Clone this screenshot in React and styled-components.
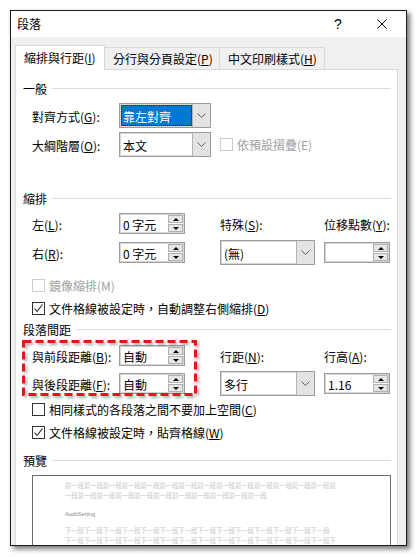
import React from 'react';
import styled, { createGlobalStyle } from 'styled-components';

// Global page reset
const GlobalStyle = createGlobalStyle`
  html, body {
    margin: 0;
    padding: 0;
    background: #fff;
  }
  body {
    font-family: "Noto Sans CJK TC", "Noto Sans", sans-serif;
    font-size: 12px;
    color: #000;
  }
  * {
    box-sizing: border-box;
  }
`;

const Page = styled.div`
  padding: 10px 0 0 10px;
  height: 557px;
`;

const Dialog = styled.div`
  width: 397px;
  height: 536px;
  border: 1px solid #1c1c1c;
  background: #f0f0f0;
  box-shadow: 3px 3px 5px rgba(0, 0, 0, 0.55);
  overflow: hidden;
  display: flex;
  flex-direction: column;
`;

const TitleBar = styled.div`
  height: 26px;
  flex-shrink: 0;
  background: #fff;
  display: flex;
  align-items: center;
  padding-left: 6px;
`;

const Title = styled.div`
  flex: 1;
  line-height: 16px;
`;

const TitleButton = styled.div`
  width: ${(p) => p.$w}px;
  height: 26px;
  display: flex;
  align-items: center;
  justify-content: center;
  font-family: "Liberation Sans", sans-serif;
  font-size: 14px;
`;

const Body = styled.div`
  flex: 1;
  display: flex;
  flex-direction: column;
  padding: 8px 8px 0 4px;
`;

const TabRow = styled.div`
  display: flex;
  align-items: flex-end;
  height: 24px;
  flex-shrink: 0;
  position: relative;
  z-index: 1;
`;

const Tab = styled.div`
  width: ${(p) => p.$w}px;
  height: ${(p) => (p.$active ? 25 : 22)}px;
  margin-bottom: ${(p) => (p.$active ? -1 : 0)}px;
  margin-left: ${(p) => (p.$first ? 0 : -1)}px;
  background: ${(p) => (p.$active ? '#fff' : '#f0f0f0')};
  border: 1px solid #d9d9d9;
  border-bottom: none;
  display: flex;
  align-items: center;
  padding-left: 8px;
  padding-bottom: ${(p) => (p.$active ? 2 : 1)}px;
  white-space: nowrap;
`;

const Panel = styled.div`
  flex: 1;
  position: relative;
  z-index: 0;
  background: #fff;
  border: 1px solid #d9d9d9;
  border-bottom: none;
  padding: 0 6px 0 7px;
`;

const Header = styled.div`
  display: flex;
  align-items: center;
  gap: 5px;
  height: 16px;
  margin-top: ${(p) => p.$mt}px;
  white-space: nowrap;

  &::after {
    content: '';
    flex: 1;
    height: 1px;
    background: #dcdcdc;
  }
`;

const FieldGrid = styled.div`
  position: relative;
  display: grid;
  grid-template-columns: ${(p) => p.$cols};
  grid-template-rows: ${(p) => p.$rows};
  row-gap: ${(p) => p.$gap}px;
  align-items: center;
  margin-top: ${(p) => p.$mt}px;
  padding-left: 9px;
`;

const Label = styled.span`
  white-space: nowrap;
  line-height: 16px;
  padding-top: 2px;
`;

const Combo = styled.div`
  width: ${(p) => p.$w}px;
  height: 25px;
  display: flex;
  background: #fff;
  border: 1px solid #9c9c9c;
  box-shadow: inset 0 0 0 1px #d6d6d6;
`;

const ComboText = styled.div`
  flex: 1;
  display: flex;
  align-items: center;
  padding: 1px 0 0 3px;
  white-space: nowrap;
`;

const Selected = styled.div`
  flex: 1;
  margin: 1px 0 1px 1px;
  display: flex;
  align-items: center;
  padding: 1px 0 0 1px;
  background: #0078d7;
  color: #fff;
  border: 1px dotted #3b2400;
`;

const ComboButton = styled.div`
  width: 18px;
  display: flex;
  align-items: center;
  justify-content: center;
  background: #e3e3e3;
  border-left: 1px solid #b4b4b4;
`;

const Spin = styled.div`
  width: 66px;
  height: 21px;
  display: flex;
  align-items: center;
  background: #fff;
  border: 1px solid #9c9c9c;
  box-shadow: inset 0 0 0 1px #d6d6d6;
  padding: 1px 1px 1px 3px;
`;

const SpinText = styled.div`
  flex: 1;
  white-space: nowrap;
  padding-top: 1px;
`;

const SpinButtons = styled.div`
  display: flex;
  flex-direction: column;
  gap: 1px;
`;

const SpinArrow = styled.div`
  width: 15px;
  height: 8px;
  background: #e6e6e6;
  border: 1px solid #b0b0b0;
  display: flex;
  align-items: center;
  justify-content: center;

  &::before {
    content: '';
    border-left: 3px solid transparent;
    border-right: 3px solid transparent;
    ${(p) => (p.$down ? 'border-top: 3px solid #000;' : 'border-bottom: 3px solid #000;')}
  }
`;

const CheckGroup = styled.div`
  display: flex;
  flex-direction: column;
  margin-top: ${(p) => p.$mt}px;
  padding-left: 9px;
`;

const CheckRow = styled.div`
  display: flex;
  align-items: center;
  gap: 4px;
  height: 23px;
  white-space: nowrap;
  color: ${(p) => (p.$disabled ? '#a0a0a0' : '#000')};
`;

const Box = styled.span`
  width: 13px;
  height: 13px;
  flex-shrink: 0;
  border: 1px solid ${(p) => (p.$disabled ? '#cccccc' : '#333')};
  background: #fff;
  display: flex;
  align-items: center;
  justify-content: center;
`;

const Highlight = styled.svg`
  position: absolute;
  left: -1px;
  top: -5px;
  filter: drop-shadow(2px 2px 1.5px rgba(0, 0, 0, 0.35));
  pointer-events: none;
`;

const Preview = styled.div`
  margin: 7px 0 0 9px;
  height: 100px;
  border: 1px solid #6b6b6b;
  padding: 5px 0 0 32px;
  background: #fff;
`;

const PreviewLine = styled.div`
  font-size: 6.3px;
  line-height: 10px;
  height: 10px;
  white-space: nowrap;
  color: #c6c6c6;
  margin-top: ${(p) => p.$mt || 0}px;
`;

const PreviewSample = styled.div`
  font-family: "Liberation Sans", sans-serif;
  font-size: 5.6px;
  line-height: 10px;
  height: 10px;
  color: #8a8a8a;
  margin-top: 8px;
`;

const Chevron = () => (
  <svg width="9" height="5" viewBox="0 0 9 5">
    <polyline points="0.5,0.5 4.5,4.5 8.5,0.5" fill="none" stroke="#606060" strokeWidth="1" />
  </svg>
);

const Check = () => (
  <svg width="11" height="11" viewBox="0 0 11 11">
    <polyline points="1.5,5.5 4,8.5 9.5,1.5" fill="none" stroke="#222" strokeWidth="1.1" />
  </svg>
);

const CloseIcon = () => (
  <svg width="10" height="10" viewBox="0 0 10 10">
    <path d="M0.5 0.5 L9.5 9.5 M9.5 0.5 L0.5 9.5" stroke="#000" strokeWidth="1" />
  </svg>
);

const SpinBox = ({ value }) => (
  <Spin>
    <SpinText>{value}</SpinText>
    <SpinButtons>
      <SpinArrow />
      <SpinArrow $down />
    </SpinButtons>
  </Spin>
);

const Dropdown = ({ value, width, selected }) => (
  <Combo $w={width}>
    {selected ? <Selected>{value}</Selected> : <ComboText>{value}</ComboText>}
    <ComboButton>
      <Chevron />
    </ComboButton>
  </Combo>
);

const CheckItem = ({ checked, disabled, children }) => (
  <CheckRow $disabled={disabled}>
    <Box $disabled={disabled}>{checked ? <Check /> : null}</Box>
    <span>{children}</span>
  </CheckRow>
);

const before = '前一段'.repeat(30);
const after = '下一段'.repeat(30);

const App = () => {
  return (
    <Page>
      <GlobalStyle />
      <Dialog>
        <TitleBar>
          <Title>段落</Title>
          <TitleButton $w={40}>?</TitleButton>
          <TitleButton $w={48}>
            <CloseIcon />
          </TitleButton>
        </TitleBar>
        <Body>
          <TabRow>
            <Tab $w={90} $active $first>縮排與行距(<u>I</u>)</Tab>
            <Tab $w={116}>分行與分頁設定(<u>P</u>)</Tab>
            <Tab $w={106}>中文印刷樣式(<u>H</u>)</Tab>
          </TabRow>
          <Panel>
            <Header $mt={10}>一般</Header>
            <FieldGrid $cols="87px 101px auto" $rows="25px 25px" $gap={4} $mt={7}>
              <Label>對齊方式(<u>G</u>):</Label>
              <Dropdown value="靠左對齊" width={92} selected />
              <span />
              <Label>大綱階層(<u>O</u>):</Label>
              <Dropdown value="本文" width={92} />
              <CheckItem disabled>依預設摺疊(E)</CheckItem>
            </FieldGrid>

            <Header $mt={33}>縮排</Header>
            <FieldGrid $cols="87px 101px 104px 66px" $rows="21px 25px" $gap={6} $mt={7}>
              <Label>左(<u>L</u>):</Label>
              <SpinBox value="0 字元" />
              <Label>特殊(<u>S</u>):</Label>
              <Label>位移點數(<u>Y</u>):</Label>
              <Label>右(<u>R</u>):</Label>
              <SpinBox value="0 字元" />
              <Dropdown value="(無)" width={95} />
              <SpinBox value="" />
            </FieldGrid>
            <CheckGroup $mt={9}>
              <CheckItem disabled>鏡像縮排(M)</CheckItem>
              <CheckItem checked>文件格線被設定時，自動調整右側縮排(<u>D</u>)</CheckItem>
            </CheckGroup>

            <Header $mt={1}>段落間距</Header>
            <FieldGrid $cols="87px 101px 104px 66px" $rows="21px 25px" $gap={5} $mt={8}>
              <Label>與前段距離(<u>B</u>):</Label>
              <SpinBox value="自動" />
              <Label>行距(<u>N</u>):</Label>
              <Label>行高(<u>A</u>):</Label>
              <Label>與後段距離(<u>F</u>):</Label>
              <SpinBox value="自動" />
              <Dropdown value="多行" width={95} />
              <SpinBox value="1.16" />
              <Highlight width="176" height="57" viewBox="0 0 176 57">
                <rect x="1.5" y="1.5" width="172" height="53" fill="none" stroke="#e3161b" strokeWidth="3" strokeDasharray="8 4" />
              </Highlight>
            </FieldGrid>
            <CheckGroup $mt={2}>
              <CheckItem>相同樣式的各段落之間不要加上空間(<u>C</u>)</CheckItem>
              <CheckItem checked>文件格線被設定時，貼齊格線(<u>W</u>)</CheckItem>
            </CheckGroup>

            <Header $mt={8}>預覽</Header>
            <Preview>
              <PreviewLine>{before.slice(0, 43)}</PreviewLine>
              <PreviewLine>{before.slice(43, 75)}</PreviewLine>
              <PreviewSample>AuditSetting</PreviewSample>
              <PreviewLine $mt={7}>{after.slice(0, 42)}</PreviewLine>
              <PreviewLine>{after.slice(42, 85)}</PreviewLine>
            </Preview>
          </Panel>
        </Body>
      </Dialog>
    </Page>
  );
};

export default App;
